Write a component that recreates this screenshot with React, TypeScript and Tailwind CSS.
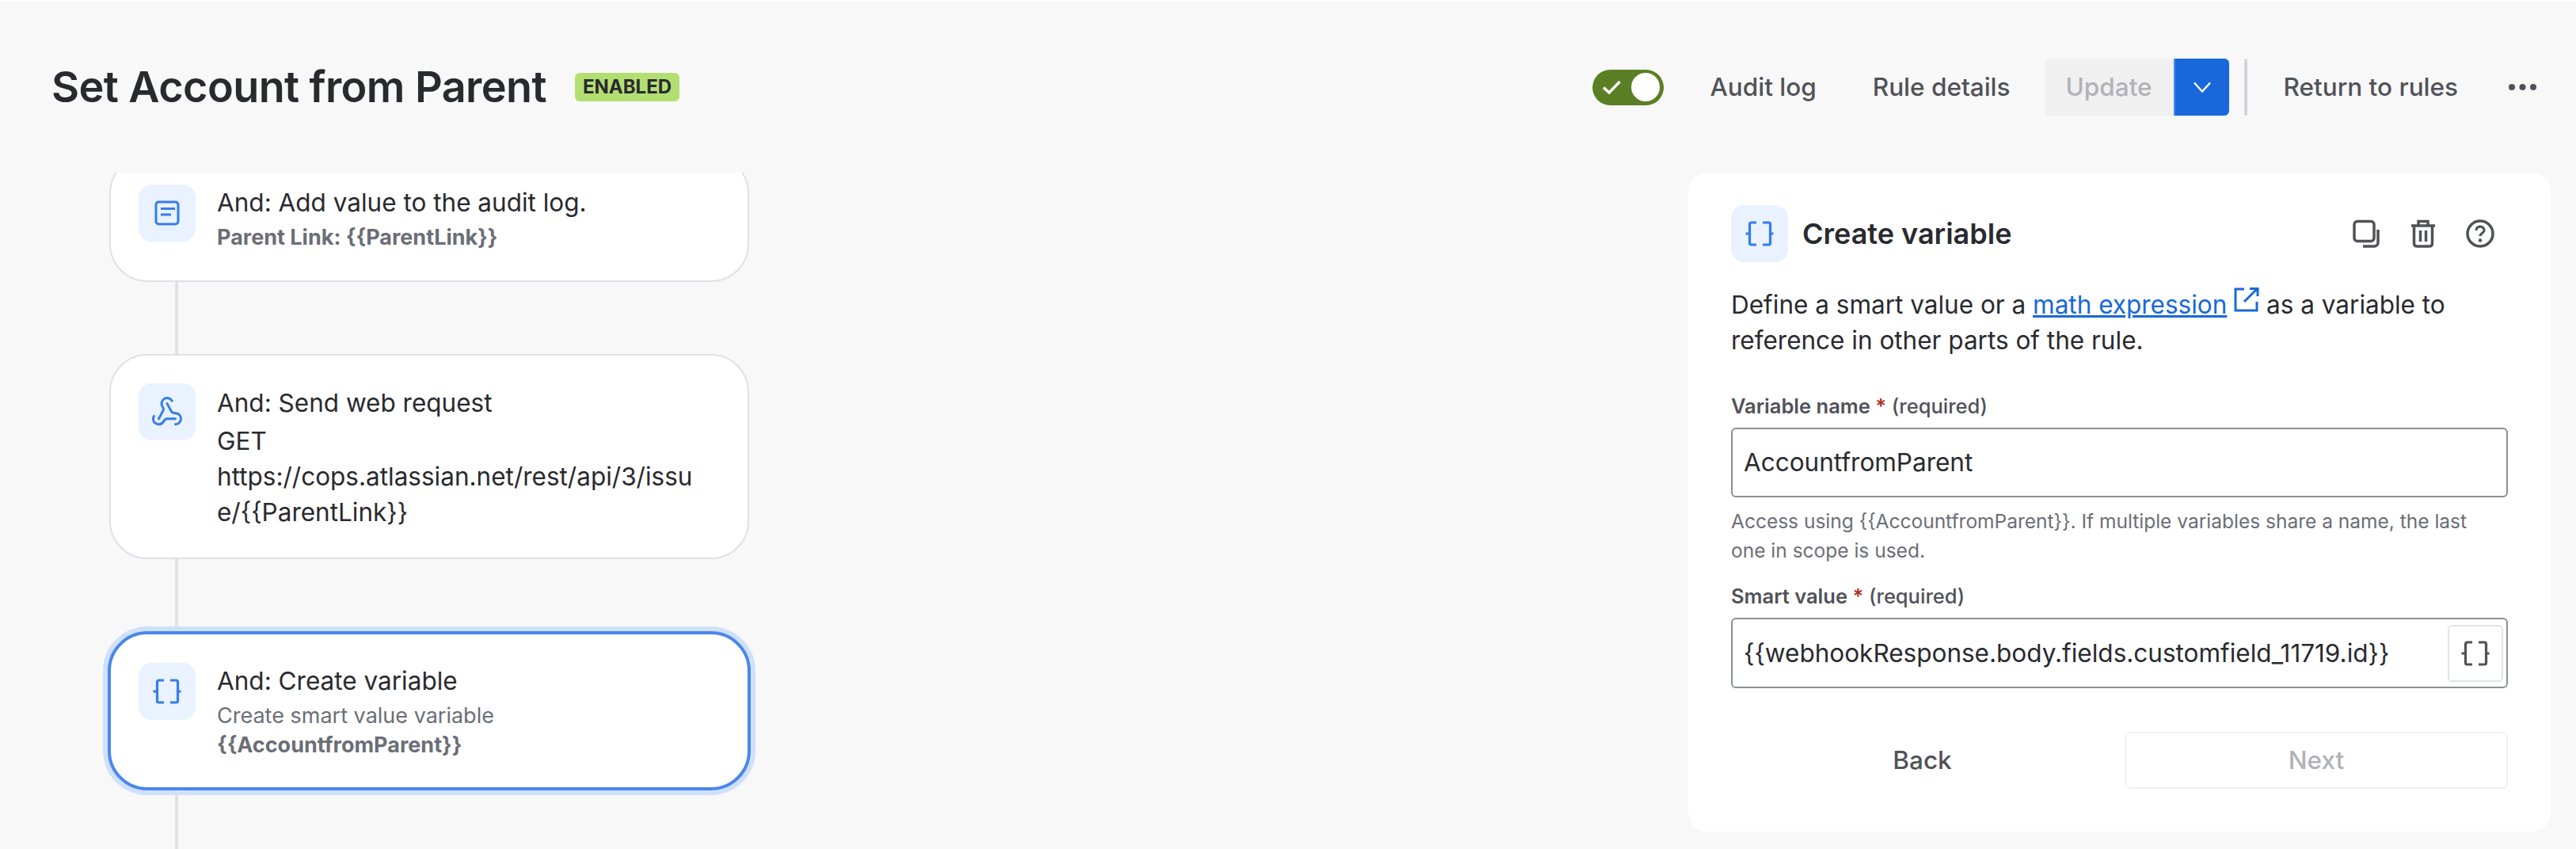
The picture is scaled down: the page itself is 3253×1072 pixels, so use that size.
import { Webhook } from 'lucide-react';
import type { ReactNode } from 'react';

function Braces({ className }: { className: string }) {
  return (
    <svg viewBox="0 0 36 36" fill="none" stroke="currentColor" strokeWidth="3.2" className={className}>
      <path d="M14 4H7.500a2 2 0 0 0-2 2v24a2 2 0 0 0 2 2H14M0.500 18h5" />
      <path d="M22 4h7.500a2 2 0 0 1 2 2v24a2 2 0 0 1-2 2H22M35.500 18h-5" />
    </svg>
  );
}

function LogIcon() {
  return (
    <svg viewBox="0 0 36 36" fill="none" stroke="currentColor" className="h-[36px] w-[36px] text-[#357de8]">
      <rect x="4" y="4" width="28" height="28" rx="3.5" strokeWidth="3" />
      <path d="M10 12.500h18M10 20h13" strokeWidth="3" />
    </svg>
  );
}

function CopyIcon() {
  return (
    <svg viewBox="0 0 36 36" fill="none" stroke="currentColor" strokeWidth="3.500" className="h-[36px] w-[36px] text-[#505258]">
      <rect x="3" y="2.500" width="25" height="25" rx="4" />
      <path d="M33 13v16c0 3-2 5-5 5H14" />
    </svg>
  );
}

function TrashIcon() {
  return (
    <svg viewBox="0 0 36 36" fill="none" stroke="currentColor" strokeWidth="3.500" className="h-[36px] w-[36px] text-[#505258]">
      <path d="M3 8h30M12 8V2.500h12V8M6.500 8v22.500c0 2 1.500 3.500 3.500 3.500h16c2 0 3.500-1.500 3.500-3.500V8" />
      <path d="M14.500 14v14M21.500 14v14" />
    </svg>
  );
}

function HelpIcon() {
  return (
    <svg viewBox="0 0 36 36" fill="none" stroke="currentColor" strokeWidth="3.500" className="h-[36px] w-[36px] text-[#505258]">
      <circle cx="18" cy="18" r="16" />
      <path d="M13 14c0-3 2.200-4.800 5-4.800s5 1.800 5 4.500c0 3.800-5 3.800-5 7.300" strokeWidth="3.200" />
      <circle cx="18" cy="26.500" r="2.200" fill="currentColor" stroke="none" />
    </svg>
  );
}

function ExternalIcon() {
  return (
    <svg viewBox="0 0 32 32" fill="none" stroke="currentColor" strokeWidth="3" className="inline-block h-[32px] w-[32px] align-[2px] text-[#1868db]">
      <path d="M13 3H2v27h27V19" />
      <path d="M13 19L29 3M20 2.500h10V12" />
    </svg>
  );
}

function Tile({ children }: { children: ReactNode }) {
  return (
    <div className="flex h-[72px] w-[72px] shrink-0 items-center justify-center rounded-[16px] bg-[#e9f2fe]">
      {children}
    </div>
  );
}

function Connector() {
  return <div className="ml-[83px] h-[91px] w-[4px] shrink-0 bg-[#dfe1e6]" />;
}

function Label({ name }: { name: string }) {
  return (
    <div className="text-[25.5px] leading-[32px] text-[#505258]">
      <span className="font-semibold">{name}</span>
      <span className="font-semibold text-[#ae2e24]"> *</span>
      <span className="font-medium"> (required)</span>
    </div>
  );
}

export default function App() {
  return (
    <div className="flex h-screen w-full flex-col overflow-hidden border-t-[2px] border-white bg-[#f8f8f8] font-['Inter',sans-serif] text-[#292a2e]">
      <header className="flex h-[216px] shrink-0 items-center justify-between pl-[65px] pr-[50px]">
        <div className="flex items-center gap-[36px]">
          <h1 className="text-[54px] font-semibold leading-[64px] tracking-[-0.6px]">Set Account from Parent</h1>
          <span className="rounded-[6px] bg-[#b3df72] px-[10px] text-[24px] font-bold leading-[36px]">ENABLED</span>
        </div>
        <div className="flex items-center text-[31.5px] font-medium text-[#505258]">
          <div className="mr-[58px] flex h-[45px] w-[90px] items-center justify-between rounded-full bg-[#5b7f24] pl-[12px] pr-[5px]">
            <svg viewBox="0 0 24 18" fill="none" stroke="white" strokeWidth="3.500" className="h-[18px] w-[24px]">
              <path d="M2 9.500l7 6.500L22.500 2" />
            </svg>
            <div className="h-[36px] w-[36px] rounded-full bg-white" />
          </div>
          <span className="mr-[71px]">Audit log</span>
          <span className="mr-[43px]">Rule details</span>
          <div className="flex h-[72px] w-[233px] overflow-hidden rounded-[6px]">
            <div className="flex w-[163px] items-center justify-center bg-[#f0f0f0] text-[#b0b2b8]">Update</div>
            <div className="flex flex-1 items-center justify-center border-l-[2px] border-[#4a87ea] bg-[#1868db]">
              <svg viewBox="0 0 22 14" fill="none" stroke="white" strokeWidth="2.400" className="h-[14px] w-[22px]">
                <path d="M1 1.500l10 11 10-11" />
              </svg>
            </div>
          </div>
          <div className="ml-[19px] mr-[46px] h-[72px] w-[4px] rounded-full bg-[#d4d5d8]" />
          <span className="mr-[64px]">Return to rules</span>
          <svg viewBox="0 0 35 8" fill="currentColor" className="h-[8px] w-[35px]">
            <circle cx="4" cy="4" r="4" />
            <circle cx="17.500" cy="4" r="4" />
            <circle cx="31" cy="4" r="4" />
          </svg>
        </div>
      </header>

      <main className="flex min-h-0 flex-1 justify-between pl-[138px] pr-[32px]">
        <div className="flex w-[808px] flex-col">
          <div className="-mx-[14px] h-full overflow-hidden px-[14px]">
            <div className="-mt-[22px] flex flex-col">
              <div className="flex h-[160px] shrink-0 gap-[27px] rounded-[48px] border-[2px] border-[#dfe1e6] bg-white pl-[35px] pt-[35px]">
                <Tile><LogIcon /></Tile>
                <div>
                  <div className="text-[31.5px] leading-[45px]">And: Add value to the audit log.</div>
                  <div className="mt-[3px] text-[27px] font-bold leading-[37px] text-[#6b6e76]">Parent Link: {'{{ParentLink}}'}</div>
                </div>
              </div>
              <Connector />
              <div className="flex h-[259px] shrink-0 gap-[27px] rounded-[48px] border-[2px] border-[#dfe1e6] bg-white pl-[35px] pt-[35px]">
                <Tile><Webhook size={42} strokeWidth={1.700} className="text-[#357de8]" /></Tile>
                <div className="w-[608px] break-all pt-[2px] text-[31.5px] leading-[45px]">
                  <div className="mb-[3px]">And: Send web request</div>
                  <div>GET</div>
                  <div>https://cops.atlassian.net/rest/api/3/issue/{'{{ParentLink}}'}</div>
                </div>
              </div>
              <Connector />
              <div className="-mx-[2px] flex h-[201px] shrink-0 gap-[27px] rounded-[50px] border-[4px] border-[#4a87ea] bg-white pl-[35px] pt-[36px] shadow-[0_0_0_6px_#cfe0fc]">
                <Tile><Braces className="h-[36px] w-[36px] text-[#357de8]" /></Tile>
                <div>
                  <div className="text-[31.5px] leading-[45px]">And: Create variable</div>
                  <div className="mt-[3px] text-[27px] leading-[37px] text-[#6b6e76]">Create smart value variable</div>
                  <div className="text-[27px] font-bold leading-[37px] text-[#6b6e76]">{'{{AccountfromParent}}'}</div>
                </div>
              </div>
              <div className="ml-[83px] h-[200px] w-[4px] shrink-0 bg-[#dfe1e6]" />
            </div>
          </div>
        </div>

        <aside className="flex h-[832px] w-[1089px] flex-col rounded-[24px] bg-white px-[54px] pt-[41px]">
          <div className="flex h-[72px] items-center">
            <Tile><Braces className="h-[36px] w-[36px] text-[#357de8]" /></Tile>
            <h2 className="ml-[18px] flex-1 text-[36px] font-semibold">Create variable</h2>
            <div className="mr-[17px] flex gap-[36px]">
              <CopyIcon />
              <TrashIcon />
              <HelpIcon />
            </div>
          </div>
          <p className="mt-[31px] text-[31.5px] leading-[45px]">
            Define a smart value or a <span className="text-[#1868db] underline">math expression</span> <ExternalIcon /> as a variable to reference in other parts of the rule.
          </p>
          <div className="mt-[45px]"><Label name="Variable name" /></div>
          <div className="mt-[11px] flex h-[88px] items-center rounded-[6px] border-[2px] border-[#8c8f97] pl-[14px] text-[31.5px]">AccountfromParent</div>
          <p className="mt-[12px] pr-[30px] text-[24.5px] leading-[37px] text-[#6b6e76]">
            Access using {'{{AccountfromParent}}'}. If multiple variables share a name, the last one in scope is used.
          </p>
          <div className="mt-[23px]"><Label name="Smart value" /></div>
          <div className="mt-[11px] flex h-[89px] items-center justify-between rounded-[6px] border-[2px] border-[#8c8f97] pl-[14px] pr-[4px] text-[31.5px]">
            <span>{'{{webhookResponse.body.fields.customfield_11719.id}}'}</span>
            <div className="flex h-[72px] w-[70px] items-center justify-center rounded-[6px] border-[2px] border-[#e2e3e5]">
              <Braces className="h-[36px] w-[36px] text-[#505258]" />
            </div>
          </div>
          <div className="mt-[55px] flex gap-[14px]">
            <div className="flex h-[72px] flex-1 items-center justify-center text-[31.5px] font-medium text-[#505258]">Back</div>
            <div className="flex h-[72px] w-[484px] items-center justify-center rounded-[6px] border-[2px] border-[#f0f1f2] text-[31.5px] font-medium text-[#b0b2b8]">Next</div>
          </div>
        </aside>
      </main>
    </div>
  );
}
